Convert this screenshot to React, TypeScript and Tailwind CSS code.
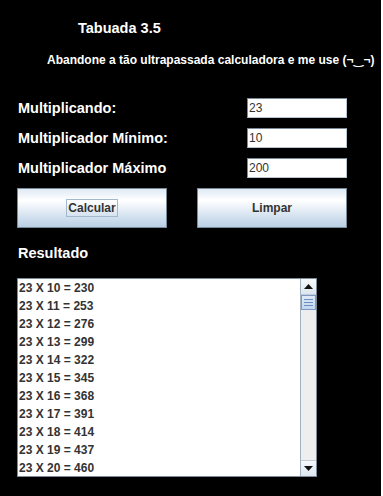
import React from 'react';

const font = { fontFamily: '"Liberation Sans", Arial, "DejaVu Sans", sans-serif' };

const campos = [
  { label: 'Multiplicando:', value: '23' },
  { label: 'Multiplicador Mínimo:', value: '10' },
  { label: 'Multiplicador Máximo', value: '200' },
];

function Botao({ text, focused }: { text: string; focused?: boolean }) {
  return (
    <div className="w-[150px] h-[40px] border border-[#7a8a99] bg-[linear-gradient(to_bottom,#dfe9f4_0%,#ffffff_30%,#d6e3f0_70%,#b9cfe5_100%)] flex items-center justify-center">
      <span
        className={
          'text-[12px] font-bold text-[#333] leading-[16px] px-[1px] ' +
          (focused ? 'border border-[#a3b8cc]' : 'border border-transparent')
        }
      >
        {text}
      </span>
    </div>
  );
}

export default function App() {
  const linhas = [];
  for (let i = 10; i <= 20; i++) linhas.push(`23 X ${i} = ${23 * i}`);

  return (
    <div className="w-[383px] h-[496px] bg-white flex" style={font}>
      <div className="w-[381px] h-full bg-black flex flex-col">
        <div className="mt-[20px] pl-[78px] text-white font-bold text-[14.5px] leading-[17px]">Tabuada 3.5</div>
        <div className="mt-[16px] pl-[47px] text-white font-bold text-[12px] leading-[14px] whitespace-nowrap">
          Abandone a tão ultrapassada calculadora e me use (¬‿¬)
        </div>

        <div className="mt-[31px] flex flex-col gap-[10px] px-[18px]">
          {campos.map((c) => (
            <div key={c.label} className="flex items-center h-[20px]">
              <div className="w-[229px] text-white font-bold text-[14.5px] leading-[16px]">{c.label}</div>
              <div className="w-[100px] h-[20px] bg-white border border-[#7a8a99] border-b-[#b8c4d0] border-r-[#b8c4d0] flex items-center pl-[1px] text-[12px] text-[#333]">
                {c.value}
              </div>
            </div>
          ))}
        </div>

        <div className="mt-[10px] flex gap-[30px] pl-[17px]">
          <Botao text="Calcular" focused />
          <Botao text="Limpar" />
        </div>

        <div className="mt-[17px] pl-[18px] text-white font-bold text-[14.5px] leading-[16px]">Resultado</div>

        <div className="mt-[17px] ml-[17px] w-[300px] h-[199px] border border-[#7a8a99] bg-white flex">
          <div className="flex-1 flex flex-col">
            {linhas.map((l) => (
              <div key={l} className="h-[18px] flex items-center pl-[1px] text-[12px] font-bold text-[#333]">
                {l}
              </div>
            ))}
          </div>
          <div className="w-[16px] h-full bg-[#eeeeee] border-l border-[#a3b0bd] flex flex-col">
            <div className="h-[16px] flex items-center justify-center border-b border-[#c4ccd4] bg-[linear-gradient(to_bottom,#f6f9fc,#dde6ef)]">
              <svg width="9" height="5" viewBox="0 0 9 5">
                <polygon points="0,5 9,5 4.5,0" fill="#111" />
              </svg>
            </div>
            <div className="h-[15px] border border-[#7a99c6] bg-[linear-gradient(to_bottom,#dfeaf8,#c2d6ef)] flex flex-col items-center justify-center gap-[2px]">
              <div className="w-[9px] h-[1px] bg-[#6f8fbf]" />
              <div className="w-[9px] h-[1px] bg-[#6f8fbf]" />
              <div className="w-[9px] h-[1px] bg-[#6f8fbf]" />
            </div>
            <div className="flex-1" />
            <div className="h-[16px] flex items-center justify-center border-t border-[#c4ccd4] bg-[linear-gradient(to_bottom,#f6f9fc,#dde6ef)]">
              <svg width="9" height="5" viewBox="0 0 9 5">
                <polygon points="0,0 9,0 4.5,5" fill="#111" />
              </svg>
            </div>
          </div>
        </div>
      </div>
    </div>
  );
}
